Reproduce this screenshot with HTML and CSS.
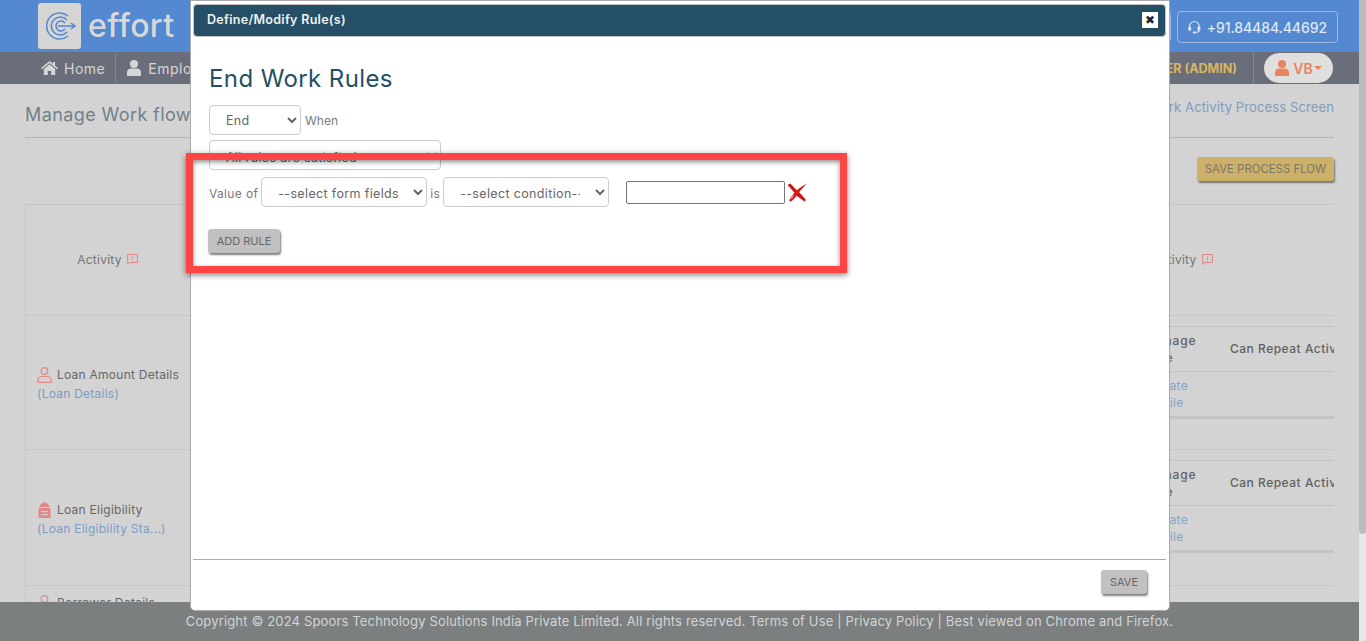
FILE: index.html
```html
<!DOCTYPE html>
<html lang="en">
<head>
<meta charset="utf-8">
<title>Manage Work flow</title>
<link rel="stylesheet" href="styles.css">
</head>
<body>
<div class="page">
  <header class="topbar">
    <div class="logo-box">
      <svg width="34" height="34" viewBox="0 0 34 34" fill="none" stroke="#5488d0" stroke-width="1.500">
        <path d="M25 7A13 13 0 1 0 25 27"/>
        <path d="M24 11A9 9 0 1 0 24 23"/>
        <path d="M22 14A5 5 0 1 0 22 20"/>
        <path d="M15 17H32M28 14l4 3-4 3"/>
      </svg>
    </div>
    <span class="brand">effort</span>
    <div class="top-actions">
      <span class="top-btn top-btn-hidden">Support</span>
      <span class="top-btn">
        <svg width="16" height="17" viewBox="0 0 16 17" fill="none" stroke="#dfe8f6" stroke-width="1.300"><path d="M2 10V7a6 6 0 0 1 12 0v3"/><rect x="1" y="8" width="2.400" height="4" rx="1" fill="#dfe8f6"/><rect x="12.600" y="8" width="2.400" height="4" rx="1" fill="#dfe8f6"/><path d="M14 12c0 2-2 2.600-4 2.600"/><rect x="6" y="13.600" width="4" height="2.400" rx="1" fill="#dfe8f6" stroke="none"/></svg>
        +91.84484.44692
      </span>
    </div>
  </header>
  <nav class="navbar">
    <a class="nav-item nav-home">
      <svg width="17" height="14" viewBox="0 0 17 14" fill="#d6d6d6"><path d="M8.500 0 0 7l1 1.200L8.500 2l7.500 6.200L17 7l-3-2.500V1h-2v1.800z"/><path d="M8.500 3.200 2.800 8v6h4V10h3.400v4h4V8z"/></svg>
      Home
    </a>
    <a class="nav-item nav-emp">
      <svg width="14" height="16" viewBox="0 0 14 16" fill="#d6d6d6"><circle cx="7" cy="4" r="4"/><path d="M0 16v-3.500C0 10 2 8.500 4 8.500h6c2 0 4 1.500 4 4V16z"/></svg>
      Employees
    </a>
    <div class="nav-right">
      <span class="role">USER (ADMIN)</span>
      <span class="user-pill">
        <svg width="14" height="16" viewBox="0 0 14 16" fill="#e8845f"><circle cx="7" cy="4" r="4"/><path d="M0 16v-3.500C0 10 2 8.500 4 8.500h6c2 0 4 1.500 4 4V16z"/></svg>
        VB<span class="caret"></span>
      </span>
    </div>
  </nav>
  <main class="content">
    <div class="title-row">
      <h1 class="page-title">Manage Work flow</h1>
      <a class="process-link">Work Activity Process Screen</a>
    </div>
    <div class="toolbar"><button class="btn-save-flow">SAVE PROCESS FLOW</button></div>
    <div class="wf-table">
      <div class="wf-row wf-head">
        <div class="cell cell-center">Activity
          <svg class="note-icon" width="11" height="11" viewBox="0 0 11 11" fill="none" stroke="#e08888"><path d="M.5.500h10v8H3L.8 10.500z"/><path d="M5.500 2.500v3M5.500 6.500v1"/></svg>
        </div>
        <div class="cell"></div>
        <div class="cell cell-end">Activity
          <svg class="note-icon" width="11" height="11" viewBox="0 0 11 11" fill="none" stroke="#e08888"><path d="M.5.500h10v8H3L.8 10.500z"/><path d="M5.500 2.500v3M5.500 6.500v1"/></svg>
        </div>
      </div>
      <div class="wf-row wf-row-a">
        <div class="cell cell-name">
          <div class="name">
            <svg width="15" height="16" viewBox="0 0 15 16" fill="none" stroke="#e08888" stroke-width="1.200"><circle cx="7.500" cy="4" r="3.300"/><path d="M1 15.400v-1.900c0-2.500 2-4 4-4h5c2 0 4 1.500 4 4v1.900z"/></svg>
            Loan Amount Details
          </div>
          <a class="sub-name">(Loan Details)</a>
        </div>
        <div class="cell"></div>
        <div class="cell-sub">
          <div class="sub-head"><span class="sub-col1">Manage Role</span><span class="sub-col2">Can Repeat Activity</span></div>
          <div class="sub-body"><a class="sub-col1">Update Profile</a></div>
        </div>
      </div>
      <div class="wf-row wf-row-b">
        <div class="cell cell-name">
          <div class="name">
            <svg width="15" height="17" viewBox="0 0 15 17" fill="#e08888"><path d="M7.500 0l1 2h-2z"/><path d="M2.500 6c0-2.500 2.500-4 5-4s5 1.500 5 4z"/><rect x="1.500" y="7" width="12" height="10" rx="1"/><rect x="4" y="10" width="7" height="1.200" fill="#d3d3d3"/><rect x="4" y="13" width="7" height="1.200" fill="#d3d3d3"/></svg>
            Loan Eligibility
          </div>
          <a class="sub-name">(Loan Eligibility Sta...)</a>
        </div>
        <div class="cell"></div>
        <div class="cell-sub">
          <div class="sub-head"><span class="sub-col1">Manage Role</span><span class="sub-col2">Can Repeat Activity</span></div>
          <div class="sub-body"><a class="sub-col1">Update Profile</a></div>
        </div>
      </div>
      <div class="wf-row wf-row-c">
        <div class="cell cell-name">
          <div class="name">
            <svg width="15" height="16" viewBox="0 0 15 16" fill="none" stroke="#e08888" stroke-width="1.200"><circle cx="7.500" cy="4" r="3.300"/><path d="M1 15.400v-1.900c0-2.500 2-4 4-4h5c2 0 4 1.500 4 4v1.900z"/></svg>
            Borrower Details
          </div>
        </div>
      </div>
    </div>
  </main>
  <footer class="footer">Copyright © 2024 Spoors Technology Solutions India Private Limited. All rights reserved. Terms of Use | Privacy Policy | Best viewed on Chrome and Firefox.</footer>
</div>
<div class="scrollbar"><div class="scroll-thumb"></div></div>

<section class="modal">
  <div class="modal-head">
    <span class="modal-title">Define/Modify Rule(s)</span>
    <span class="modal-close">✖</span>
  </div>
  <div class="modal-body">
    <h2 class="rules-title">End Work Rules</h2>
    <div class="form-line">
      <select class="sel sel-end"><option>End</option></select>
      <span>When</span>
    </div>
    <div class="form-line">
      <select class="sel sel-when"><option>All rules are satisfied</option></select>
    </div>
    <div class="form-line rule-line">
      <span class="rule-label">Value of</span>
      <select class="sel sel-rule"><option>--select form fields--</option></select>
      <span class="rule-label">is</span>
      <select class="sel sel-rule"><option>--select condition--</option></select>
      <input class="rule-input" type="text">
      <svg class="rule-remove" width="20" height="19" viewBox="0 0 20 19">
        <path d="M.5 2 3.500 .5 7.500 5 12.500 9.500 19 17 17.500 18.500 10 13 5.500 7.500z" fill="#c91414"/>
        <path d="M20 .3 12.500 5 7.500 9.500 2 17.500 3.500 18.800 6.500 16.500 10 12.500 13.500 7.500z" fill="#d81c1c"/>
        <path d="M3 15 6 11 7 12 5 16z" fill="#e98080"/>
      </svg>
    </div>
    <button class="btn-grey btn-add">ADD RULE</button>
  </div>
  <div class="modal-foot"><button class="btn-grey">SAVE</button></div>
</section>
<div class="annotation"></div>
</body>
</html>
```
FILE: styles.css
```css
* { box-sizing: border-box; }
html, body { margin: 0; height: 100%; overflow: hidden; }
body {
  display: flex;
  font-family: Inter, "Open Sans", sans-serif;
  font-size: 12px;
  color: #6e6e6e;
  background: #d3d3d3;
}
.page { flex: 1; min-width: 0; height: 641px; display: flex; flex-direction: column; }
.scrollbar { width: 7px; height: 641px; background: #e8e8e8; }
.scroll-thumb { height: 534px; background: #bcbcbc; border-radius: 0 0 4px 4px; }

.topbar {
  height: 52px; flex: none; background: #5488d0;
  display: flex; align-items: center; padding-left: 38px; padding-right: 21px;
}
.logo-box {
  width: 43px; height: 46px; background: #d5d5d5; border-radius: 3px;
  display: flex; align-items: center; justify-content: center;
}
.brand { margin-left: 7px; font-size: 32px; font-weight: 500; color: #d8d8d8; line-height: 1; letter-spacing: .4px; }
.top-actions { margin-left: auto; display: flex; gap: 6px; margin-top: 2px; }
.top-btn {
  height: 32px; padding: 0 10px; border: 1px solid #9db9e4; border-radius: 4px;
  display: flex; align-items: center; gap: 6px; width: 161px;
  color: #dfe8f6; font-size: 14px; font-weight: 500; white-space: nowrap; letter-spacing: -.08px;
}
.top-btn-hidden { width: 120px; }

.navbar {
  height: 32px; flex: none; background: #6a6e7a; display: flex; align-items: center;
  padding-left: 41px; padding-right: 26px; color: #d6d6d6; font-size: 14px; letter-spacing: .5px;
}
.nav-item { display: flex; align-items: center; gap: 6px; height: 30px; }
.nav-home { padding-right: 10px; border-right: 1px solid #85888f; margin-right: 11px; }
.nav-emp { gap: 7px; }
.nav-right { margin-left: auto; display: flex; align-items: center; height: 30px; letter-spacing: 0; }
.role { color: #d9b75e; font-weight: 700; font-size: 12.500px; padding-right: 16px; border-right: 1px solid #85888f; height: 30px; line-height: 31px; }
.user-pill {
  margin-left: 10px; width: 69px; height: 30px; border-radius: 15px; background: #e0dfdd;
  display: flex; align-items: center; justify-content: center; gap: 4px;
  color: #e8845f; font-size: 14px; font-weight: 600;
}
.caret { width: 0; height: 0; border: 4px solid transparent; border-top-color: #e8845f; border-bottom: 0; margin-left: -3px; }

.content { flex: 1; min-height: 0; overflow: hidden; padding: 0 25px; }
.title-row {
  height: 54px; display: flex; justify-content: space-between; border-bottom: 1px solid #b5b5b5;
}
.page-title { margin: 21px 0 0; font-size: 18px; font-weight: 400; line-height: 20px; color: #72808c; letter-spacing: .4px; white-space: nowrap; }
.process-link { margin-top: 14px; font-size: 13px; line-height: 18px; color: #7f9bbd; letter-spacing: .12px; }
.toolbar { height: 67px; padding-top: 19px; display: flex; justify-content: flex-end; border-bottom: 1px solid #c6c6c6; }
.btn-save-flow {
  width: 137px; height: 24px; padding: 0; border: 0; border-radius: 3px;
  background: #cdb06a; color: #7c7667; font: 400 11.400px Inter, sans-serif;
  box-shadow: 1px 2px 2px rgba(0,0,0,.45);
}
.wf-table { border-left: 1px solid #c8c8c8; }
.wf-row { display: grid; grid-template-columns: 165px 1fr 189px; border-bottom: 1px solid #c8c8c8; }
.wf-head { height: 111px; }
.wf-row-a { height: 134px; }
.wf-row-b { height: 136px; }
.wf-row-c { height: 60px; border-bottom: 0; }
.cell { font-size: 12px; }
.cell-center, .cell-end { display: flex; align-items: center; gap: 5px; color: #747474; padding-bottom: 2px; letter-spacing: .25px; }
.cell-center { justify-content: center; padding-right: 2px; }
.cell-end { padding-left: 7px; justify-content: flex-start; }
.note-icon { flex: none; }
.cell-name { padding: 3px 0 0 11px; display: flex; flex-direction: column; justify-content: center; gap: 3px; white-space: nowrap; margin-right: -30px; letter-spacing: .25px; }
.wf-row-b .cell-name { padding-top: 1px; }
.wf-row-c .cell-name { justify-content: flex-start; padding-top: 9px; }
.name { display: flex; align-items: flex-end; gap: 5px; font-size: 12px; line-height: 16px; color: #666; }
.sub-name { color: #7d9cc4; font-size: 12px; line-height: 15px; }
.cell-sub { padding-top: 10px; }
.sub-head {
  height: 46px; display: flex; align-items: center; border-top: 1px solid #c4c4c4; border-bottom: 1px solid #c4c4c4;
  font-weight: 500; color: #616161; line-height: 17px; padding-bottom: 1px; letter-spacing: .5px;
}
.sub-body { height: 47px; display: flex; align-items: center; border-bottom: 3px solid #c4c4c4; color: #86a3c8; line-height: 17px; letter-spacing: .3px; }
.sub-col1 { width: 85px; flex: none; padding-right: 25px; }
.sub-head .sub-col1 { letter-spacing: .85px; }
.sub-col2 { flex: 1; white-space: nowrap; overflow: hidden; }

.footer {
  height: 39px; flex: none; background: #7b7f7f; color: #d4d4d4; font-size: 13px; letter-spacing: .155px;
  padding-bottom: 2px;
  display: flex; align-items: center; justify-content: center; white-space: nowrap;
  position: relative;
}

.modal {
  position: absolute; left: 190px; top: 0; width: 980px; height: 611px;
  background: #fff; border: 1px solid #aaa; border-radius: 0 0 5px 5px;
  display: flex; flex-direction: column;
}
.modal-head {
  height: 33px; flex: none; margin: 3px 3px 0 2px; padding: 0 7px 2px 13px;
  background: #254f66; border: 1px solid #c4c4c4; border-radius: 4px;
  display: flex; align-items: center; justify-content: space-between;
}
.modal-title { color: #f2f2f2; font-size: 12.500px; font-weight: 600; letter-spacing: .3px; }
.modal-close {
  width: 16px; height: 16px; background: #fff; color: #222; font-size: 12px; line-height: 16px;
  text-align: center; font-family: "DejaVu Sans", sans-serif;
}
.modal-body { flex: 1; min-height: 0; padding: 27px 0 0 18px; }
.rules-title { margin: 0 0 11px; font-size: 24px; font-weight: 400; line-height: 30px; color: #254f66; letter-spacing: .4px; }
.form-line { display: flex; align-items: center; gap: 4px; margin-bottom: 5px; color: #7a7a7a; font-size: 12px; }
.sel {
  height: 30px; padding: 0 12px; border: 1px solid #ccc; border-radius: 4px; background: #fff;
  color: #666; font: 12.500px Inter, sans-serif; letter-spacing: .35px;
}
.sel-end { width: 92px; }
.sel-when { width: 232px; padding-top: 4px; }
.rule-line { gap: 3px; margin-top: 7px; margin-bottom: 22px; }
.rule-line .sel { padding-top: 2px; }
.rule-label { letter-spacing: .35px; padding-top: 2px; }
.sel-rule { width: 166px; }
.rule-input { width: 159px; height: 23px; margin-left: 14px; padding: 0; border: 1px solid #767676; border-radius: 2px; background: #fff; }
.rule-remove { margin-left: -1px; }
.btn-grey {
  width: 46px; height: 24px; padding: 0; border: 0; border-radius: 3px; background: #c0c0c0; color: #666;
  font: 400 11px Inter, sans-serif; box-shadow: 1px 2px 2px rgba(0,0,0,.5);
}
.btn-add { width: 72px; margin-left: -1px; display: block; }
.modal-foot {
  height: 51px; flex: none; margin: 0 3px 0 2px; padding: 10px 19px 0 0; border-top: 1px solid #aaa;
  display: flex; justify-content: flex-end; align-items: flex-start;
}
.annotation {
  position: absolute; left: 186px; top: 153px; width: 661px; height: 120px;
  border: 7px solid #ff4444; pointer-events: none;
  box-shadow: 0 2px 6px rgba(0,0,0,.5), inset 0 2px 5px rgba(0,0,0,.45);
}
```
